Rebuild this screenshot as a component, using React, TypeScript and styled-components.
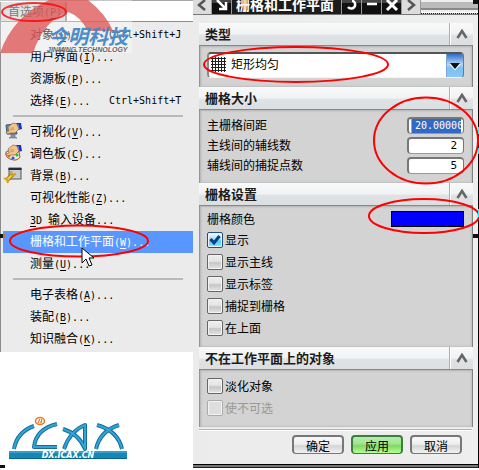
import React, { useState } from "react";
import styled, { createGlobalStyle, css } from "styled-components";

const GlobalStyle = createGlobalStyle`
  * { box-sizing: border-box; }
  body {
    margin: 0;
    background: #fff;
    font: 12px/16px "Noto Sans CJK SC", sans-serif;
    color: #000;
    overflow: hidden;
  }
  button, input, select { font: inherit; color: inherit; margin: 0; }
`;

const Page = styled.div`
  position: relative;
  display: flex;
  align-items: stretch;
`;

/* ---------- left column: menu ---------- */

const Side = styled.div`
  flex: 0 0 193px;
  display: flex;
  flex-direction: column;
`;

const MenuBar = styled.div`
  display: flex;
  height: 22px;
  padding: 1px 1px 0 0;
  background: #fff;
  border-top: 1px solid #a8a8a8;
  border-bottom: 1px solid #8c8c8c;
`;

const MenuBarButton = styled.button`
  width: 67px;
  padding: 0 0 0 7px;
  border: 0;
  border-left: 1px solid #808080;
  border-right: 2px solid #8c8c8c;
  background: #d4d4d4;
  color: #333;
  text-align: left;
  white-space: nowrap;
`;

const Menu = styled.ul`
  list-style: none;
  margin: 0;
  padding: 2px 0;
  background: #ebebeb;
  border-left: 1px solid #8c8c8c;
`;

const MenuItem = styled.li`
  display: flex;
  padding-left: 2px;
`;

const MenuButton = styled.button<{ $active?: boolean }>`
  display: grid;
  grid-template-columns: 27px 79px 1fr;
  align-items: center;
  width: 100%;
  height: 22px;
  padding: 0;
  border: 0;
  text-align: left;
  white-space: nowrap;
  background: ${(p) => (p.$active ? "#5a96ff" : "transparent")};
  color: ${(p) => (p.$active ? "#fff" : "#000")};
`;

const Divider = styled.li`
  height: 2px;
  margin: 3px 10px 4px 12px;
  background: #b9b9b9;
`;

const Latin = styled.span`
  font: 10px/16px "DejaVu Sans Mono", monospace;
`;

const Key = styled.span`
  text-decoration: underline;
  text-underline-offset: 2px;
`;

const SideFooter = styled.div`
  flex: 1;
  display: flex;
  align-items: flex-end;
  padding: 0 0 8px 8px;
`;

/* ---------- right column: dialog ---------- */

const Dialog = styled.form`
  flex: 1;
  min-width: 0;
  background: linear-gradient(90deg, #ebebeb, #eee);
  border-right: 1px solid #000;
`;

const TitleBar = styled.div`
  display: flex;
  height: 22px;
  margin-top: -7px;
  background: #1c1c1c;
  color: #fff;
  border-bottom: 1px solid #777;
`;

const TitleButton = styled.button<{ $light?: boolean }>`
  flex: 0 0 ${(p) => (p.$light ? 19 : 20)}px;
  display: flex;
  align-items: center;
  justify-content: center;
  padding: 3px 0 0;
  border: 0;
  border-right: 1px solid #9a9a9a;
  color: ${(p) => (p.$light ? "#555" : "#fff")};
  background: ${(p) =>
    p.$light ? "#dcdcdc" : "linear-gradient(#444 0 50%, #101010 50%)"};
`;

const Title = styled.h1`
  flex: 1;
  margin: 0;
  padding-left: 4px;
  overflow: hidden;
  white-space: nowrap;
  font-size: 14px;
  line-height: 23px;
  font-weight: 700;
  border-right: 1px solid #9a9a9a;
`;

const TitleTail = styled.div`
  flex: 0 0 57px;
  background: linear-gradient(#ccc 0 7px, #eee 7px 9px, #bbb 9px 15px, #8a8a85 15px 17px, #eee 17px 19px, #fff 19px);
  border-bottom: 1px dotted #0000ff;
`;

const Groups = styled.div`
  margin: 8px 5px 2px 6px;
`;

const GroupHeader = styled.h2`
  display: flex;
  justify-content: space-between;
  align-items: stretch;
  height: 23px;
  margin: 0;
  padding-left: 6px;
  font-size: 13px;
  line-height: 21px;
  font-weight: 700;
  color: #1c1c1c;
  background: linear-gradient(#f8f9f9 0%, #f1f2f3 50%, #e0e3e5 55%, #dcdfe1 100%);
  border-bottom: 1px solid #888;
`;

const Collapse = styled.button`
  width: 24px;
  padding: 0;
  border: 0;
  border-left: 1px solid #b0b0b0;
  background: none;
  display: flex;
  align-items: center;
  justify-content: center;
  box-shadow: inset 1px 0 #fff;
`;

const GroupBody = styled.div<{ $top: number; $bottom: number }>`
  padding: ${(p) => p.$top}px 8px ${(p) => p.$bottom}px 7px;
  background: #d3d3d3;
  border-left: 1px solid #949494;
  border-right: 1px solid #808080;
  box-shadow: inset 1px 1px 2px #b4b4b4, inset -1px -1px 2px #c0c0c0;
`;

const Combo = styled.div`
  position: relative;
  height: 26px;
`;

const ComboSelect = styled.select`
  appearance: none;
  width: 100%;
  height: 26px;
  padding: 0 20px 3px 22px;
  border: 2px solid #888;
  border-top-color: #555;
  border-bottom: 1px solid #f4f4f4;
  border-right-color: #777;
  border-radius: 4px;
  background: #fff;
`;

const ComboGrid = styled.svg`
  position: absolute;
  left: 4px;
  top: 5px;
  pointer-events: none;
`;

const ComboArrow = styled.span`
  position: absolute;
  right: 1px;
  top: 2px;
  bottom: 1px;
  width: 17px;
  display: flex;
  align-items: center;
  justify-content: center;
  background: linear-gradient(#2c6fcb, #b6d8f8 45%, #7fc0f5 60%, #82c8f8);
  border-left: 1px solid #78a8d8;
  border-radius: 0 3px 3px 0;
  pointer-events: none;
`;

const Row = styled.div`
  display: flex;
  justify-content: space-between;
  align-items: center;
  height: 20px;
`;

const NumberInput = styled.input<{ $selected?: boolean }>`
  width: 57px;
  height: 17px;
  padding: 0 6px 0 0;
  border: 2px solid #777;
  border-right-width: 1px;
  border-bottom: 1px solid #999;
  border-radius: 4px;
  background: #fff;
  text-align: right;
  font: 11px/14px "DejaVu Sans Mono", monospace;
  ${(p) =>
    p.$selected &&
    css`
      padding: 0 2px 0 6px;
      text-align: left;
      font-size: 10px;
      color: #fff;
      background: linear-gradient(90deg, #fff 2px, #e8a020 2px 3px, #316ac5 3px 52px, #fff 52px);
    `}
`;

const Swatch = styled.button`
  width: 73px;
  height: 16px;
  padding: 0;
  border: 1px solid #000;
  background: #0000ff;
`;

const CheckLabel = styled.label<{ $muted?: boolean }>`
  display: flex;
  align-items: center;
  gap: 2px;
  height: 22px;
  color: ${(p) => (p.$muted ? "#999" : "#000")};
`;

const CheckBox = styled.input`
  appearance: none;
  width: 16px;
  height: 16px;
  border: 1px solid #666;
  border-radius: 2px;
  background: linear-gradient(#eee, #e4e4e4 45%, #c4c6c8 55%, #e4e4e4);
  box-shadow: inset 0 0 0 1px #f4f4f4;
  &:checked {
    background: linear-gradient(#fff, #a8dcf4 45%, #55cdef 60%, #7cf0ff);
    border-color: #244f78;
  }
  &:disabled {
    border-color: #aaa;
    background: #dedede;
  }
`;

const CheckHolder = styled.span`
  position: relative;
  display: flex;
`;

const CheckMark = styled.svg`
  position: absolute;
  left: 2px;
  top: 2px;
  pointer-events: none;
`;

const Footer = styled.div`
  display: flex;
  justify-content: flex-end;
  gap: 7px;
  margin: 0 6px;
  padding: 5px 10px 10px 0;
  border-top: 1px solid #b4b4b4;
  box-shadow: inset 0 1px #fff;
`;

const PushButton = styled.button<{ $primary?: boolean }>`
  width: 52px;
  height: 19px;
  padding: 0;
  line-height: 15px;
  border-radius: 4px;
  border: ${(p) => (p.$primary ? "2px solid #3f7c3f" : "2px solid #777")};
  border-bottom-width: 1px;
  background: ${(p) =>
    p.$primary
      ? "linear-gradient(#b5edac, #a2e595 40%, #80d865 55%, #b5ff90)"
      : "linear-gradient(#f8f8f8, #eee 45%, #d4d4d4 55%, #f2f2f2)"};
`;

const BottomEdge = styled.div`
  height: 4px;
  border-top: 1px solid #000;
  border-bottom: 1px solid #222;
  background: #777;
`;

const Overlay = styled.svg`
  position: absolute;
  left: 0;
  top: 0;
  pointer-events: none;
`;

/* ---------- drawings ---------- */

const Hand = () => (
  <g>
    <path d="M13 1l5 0 1 6-4 1z" fill="#1a2fc4" />
    <path d="M15 2l1 5" stroke="#6d83ff" />
    <path d="M5 5l5-4 4 1 2 5-4 4-4 0-4 1-1-2 3-1z" fill="#efc48d" stroke="#93623a" strokeWidth=".7" />
    <path d="M7 6l4 0M7 8l4-1" stroke="#b9824f" strokeWidth=".6" />
  </g>
);

const MonitorIcon = () => (
  <svg width="20" height="18" viewBox="0 0 20 18">
    <path d="M3 3l9-1 2 10-10 0z" fill="#438cc0" stroke="#366082" />
    <path d="M5 5l5-1 1 5-5 1z" fill="#8ec7e7" />
    <path d="M8 12l4 0 0 3 2 1-8 0 2-1z" fill="#8b9298" stroke="#65737c" strokeWidth=".6" />
    <Hand />
  </svg>
);

const PaletteIcon = () => (
  <svg width="20" height="18" viewBox="0 0 20 18">
    <path d="M3 8q-1 5 4 7 7 3 10-2l-1-5-7-3z" fill="#eee6df" stroke="#9b572d" />
    <circle cx="6" cy="12" r="1.5" fill="#de7621" />
    <circle cx="10" cy="14" r="1.5" fill="#2059d6" />
    <circle cx="14" cy="11" r="1.5" fill="#28bd35" />
    <Hand />
  </svg>
);

const WindowIcon = () => (
  <svg width="20" height="18" viewBox="0 0 20 18">
    <rect x="6" y="2" width="12" height="11" fill="#c9cbcf" stroke="#54565c" />
    <path d="M5.500 3h13" stroke="#292c36" strokeWidth="2" />
    <path d="M4 14l6-6" stroke="#91690b" strokeWidth="4" />
    <path d="M4 14l6-6" stroke="#f6c72c" strokeWidth="2.500" />
    <path d="M1 12l3 2 1 3M8 5l1 4 4-1" fill="none" stroke="#d8a315" strokeWidth="2" />
  </svg>
);

const Chevron = () => (
  <svg width="12" height="10" viewBox="0 0 12 10">
    <path d="M1.500 9L6 2l4.500 7" fill="none" stroke="#666" strokeWidth="2.600" />
  </svg>
);

const IcaxLogo = () => (
  <svg width="120" height="44" viewBox="0 0 120 44" role="img" aria-label="iCAX DX.ICAX.CN">
    <g fill="none" strokeLinejoin="round">
      {[["#146e9a", 4], ["#32a4d8", 2]].map(([c, w]) => (
        <g key={c} stroke={c as string} strokeWidth={w as number}>
          <path d="M6 33Q9 16 26 10" />
          <path d="M49 8Q28 13 26 31h23" />
          <path d="M56 33Q62 15 77 9v24Q71 18 55 13" />
          <path d="M88 33Q92 15 111 9M89 9q21 6 25 24" />
        </g>
      ))}
    </g>
    <ellipse cx="32" cy="5" rx="4.500" ry="3.500" fill="#fff" stroke="#ef7a25" strokeWidth="1.600" />
    <path d="M30 7l2-4M33 7l1-4M32 6h2" stroke="#ef7a25" strokeWidth="1.200" />
    <rect x="1" y="35" width="118" height="8" fill="#1587b5" />
    <path d="M1 36h118" stroke="#5db7d9" strokeWidth="1" />
    <path d="M1 42.500h118" stroke="#086389" strokeWidth="1" />
    <text x="60" y="42" textAnchor="middle" fill="#fff" fontFamily="DejaVu Sans" fontWeight="700" fontStyle="italic" fontSize="8">DX.ICAX.CN</text>
  </svg>
);

const Annotations = () => (
  <Overlay width="479" height="470" viewBox="0 0 479 470" aria-hidden="true">
    <rect width="132" height="53" fill="#fff" opacity=".35" />
    <path d="M0 53Q13 16 49 0H88Q106 14 113 31L88 31Q80 16 68 12Q44 20 33 53Z" fill="#dc4f4f" opacity=".75" />
    <text x="48" y="44" fontSize="20" fontWeight="700" fontStyle="italic" fontFamily="Noto Sans CJK SC" fill="#4488c8" opacity=".95">今明科技</text>
    <text x="47" y="52" fontSize="7" fontWeight="700" fontStyle="italic" fontFamily="Liberation Sans" fill="#666">JINMING TECHNOLOGY</text>
    <g fill="none" stroke="#f00" strokeWidth="2">
      <ellipse cx="34" cy="12" rx="32" ry="9" opacity=".8" />
      <ellipse cx="79" cy="241" rx="69" ry="15.500" />
      <ellipse cx="296" cy="64.500" rx="92" ry="17.500" />
      <ellipse cx="426" cy="140.500" rx="52" ry="43" />
      <ellipse cx="424" cy="216" rx="55" ry="17" />
    </g>
    <path d="M0 234h3v4H0zM473 234h5v4h-5zM473 0h5v4h-5zM0 465h5v4H0z" fill="#111" />
    <path d="M3 234h2v4H3z" fill="#b87932" />
    <path d="M478 127h1v7h-1zM478 148h1v6h-1zM478 209h1v8h-1z" fill="#0ff" />
    <path d="M82 248v15l4-4 3 7 3-1-3-7h5z" fill="#fff" stroke="#000" />
  </Overlay>
);

/* ---------- composed parts ---------- */

type Entry = { label: string; hotkey?: string; shortcut?: string; icon?: React.ReactNode; active?: boolean };

const menuSections: Entry[][] = [
  [
    { label: "对象", hotkey: "O", shortcut: "Ctrl+Shift+J" },
    { label: "用户界面", hotkey: "I" },
    { label: "资源板", hotkey: "P" },
    { label: "选择", hotkey: "E", shortcut: "Ctrl+Shift+T" },
  ],
  [
    { label: "可视化", hotkey: "V", icon: <MonitorIcon /> },
    { label: "调色板", hotkey: "C", icon: <PaletteIcon /> },
    { label: "背景", hotkey: "B", icon: <WindowIcon /> },
    { label: "可视化性能", hotkey: "Z" },
    { label: "输入设备" },
    { label: "栅格和工作平面", hotkey: "W", active: true },
    { label: "测量", hotkey: "U" },
  ],
  [
    { label: "电子表格", hotkey: "A" },
    { label: "装配", hotkey: "B" },
    { label: "知识融合", hotkey: "K" },
  ],
];

const MenuEntry = ({ label, hotkey, shortcut, icon, active }: Entry) => (
  <MenuItem>
    <MenuButton type="button" $active={active}>
      <span>{icon}</span>
      <span>
        {!hotkey && <Latin><Key>3</Key>D </Latin>}
        {label}
        <Latin>{hotkey && <>(<Key>{hotkey}</Key>)</>}...</Latin>
      </span>
      {shortcut && <Latin>{shortcut}</Latin>}
    </MenuButton>
  </MenuItem>
);

const Group = ({ title, top, bottom, children }: { title: string; top: number; bottom: number; children: React.ReactNode }) => (
  <section>
    <GroupHeader>
      {title}
      <Collapse type="button" aria-label={"折叠" + title}><Chevron /></Collapse>
    </GroupHeader>
    <GroupBody $top={top} $bottom={bottom}>{children}</GroupBody>
  </section>
);

const Check = ({ label, initial = false, disabled }: { label: string; initial?: boolean; disabled?: boolean }) => {
  const [on, setOn] = useState(initial);
  return (
    <CheckLabel $muted={disabled}>
      <CheckHolder>
        <CheckBox type="checkbox" checked={on} disabled={disabled} onChange={() => setOn(!on)} />
        {on && (
          <CheckMark width="12" height="12" viewBox="0 0 12 12">
            <path d="M1.500 5l3.500 4 5.500-7" fill="none" stroke="#063f91" strokeWidth="3" />
          </CheckMark>
        )}
      </CheckHolder>
      {label}
    </CheckLabel>
  );
};

const NumberRow = ({ id, label, value, selected }: { id: string; label: string; value: string; selected?: boolean }) => (
  <Row>
    <label htmlFor={id}>{label}</label>
    <NumberInput id={id} type="text" defaultValue={value} $selected={selected} />
  </Row>
);

const Glyph = ({ d, width = 2.5 }: { d: string; width?: number }) => (
  <svg width="14" height="14" viewBox="0 0 14 14">
    <path d={d} fill="none" stroke="currentColor" strokeWidth={width} />
  </svg>
);

export default function App() {
  return (
    <>
      <GlobalStyle />
      <Page>
        <Side>
          <MenuBar>
            <MenuBarButton type="button">首选项<Latin>(<Key>P</Key>)</Latin></MenuBarButton>
          </MenuBar>
          <Menu>
            {menuSections.map((section, i) => (
              <React.Fragment key={i}>
                {i > 0 && <Divider role="separator" />}
                {section.map((e) => <MenuEntry key={e.label} {...e} />)}
              </React.Fragment>
            ))}
          </Menu>
          <SideFooter><IcaxLogo /></SideFooter>
        </Side>

        <Dialog onSubmit={(e) => e.preventDefault()}>
          <TitleBar>
            <TitleButton type="button" $light aria-label="上一个"><Glyph d="M10 2L4 7l6 5" /></TitleButton>
            <TitleButton type="button" aria-label="固定"><Glyph d="M2 2l8 8M11 4v7H4" /></TitleButton>
            <Title>栅格和工作平面</Title>
            <TitleButton type="button" aria-label="重置"><Glyph d="M7 3h1a4 4 0 1 1-5 6" /></TitleButton>
            <TitleButton type="button" aria-label="最小化"><Glyph d="M2 6h10" /></TitleButton>
            <TitleButton type="button" aria-label="关闭"><Glyph d="M2 2l10 10M12 2L2 12" width={3} /></TitleButton>
            <TitleButton type="button" $light aria-label="下一个"><Glyph d="M4 2l6 5-6 5" /></TitleButton>
            <TitleTail />
          </TitleBar>
          <Groups>
            <Group title="类型" top={6} bottom={9}>
              <Combo>
                <ComboSelect aria-label="类型" defaultValue="rect">
                  <option value="rect">矩形均匀</option>
                </ComboSelect>
                <ComboGrid width="15" height="15" viewBox="0 0 15 15">
                  <path d="M1.500 0v15M4.500 0v15M7.500 0v15M10.500 0v15M13.500 0v15M0 1.500h15M0 4.500h15M0 7.500h15M0 10.500h15M0 13.500h15" stroke="#222" />
                </ComboGrid>
                <ComboArrow>
                  <svg width="12" height="8" viewBox="0 0 12 8">
                    <path d="M1 1h10L6 7z" fill="#111" />
                    <path d="M1 2l5 6 5-6" fill="none" stroke="#fff" />
                  </svg>
                </ComboArrow>
              </Combo>
            </Group>
            <Group title="栅格大小" top={5} bottom={8}>
              <NumberRow id="major" label="主栅格间距" value="20.00000" selected />
              <NumberRow id="minor" label="主线间的辅线数" value="2" />
              <NumberRow id="snap" label="辅线间的捕捉点数" value="5" />
            </Group>
            <Group title="栅格设置" top={3} bottom={8}>
              <Row>
                <span>栅格颜色</span>
                <Swatch type="button" aria-label="栅格颜色" />
              </Row>
              <Check label="显示" initial />
              <Check label="显示主线" />
              <Check label="显示标签" />
              <Check label="捕捉到栅格" />
              <Check label="在上面" />
            </Group>
            <Group title="不在工作平面上的对象" top={5} bottom={8}>
              <Check label="淡化对象" />
              <Check label="使不可选" disabled />
            </Group>
          </Groups>
          <Footer>
            <PushButton type="button">确定</PushButton>
            <PushButton type="submit" $primary>应用</PushButton>
            <PushButton type="button">取消</PushButton>
          </Footer>
          <BottomEdge />
        </Dialog>
        <Annotations />
      </Page>
    </>
  );
}
